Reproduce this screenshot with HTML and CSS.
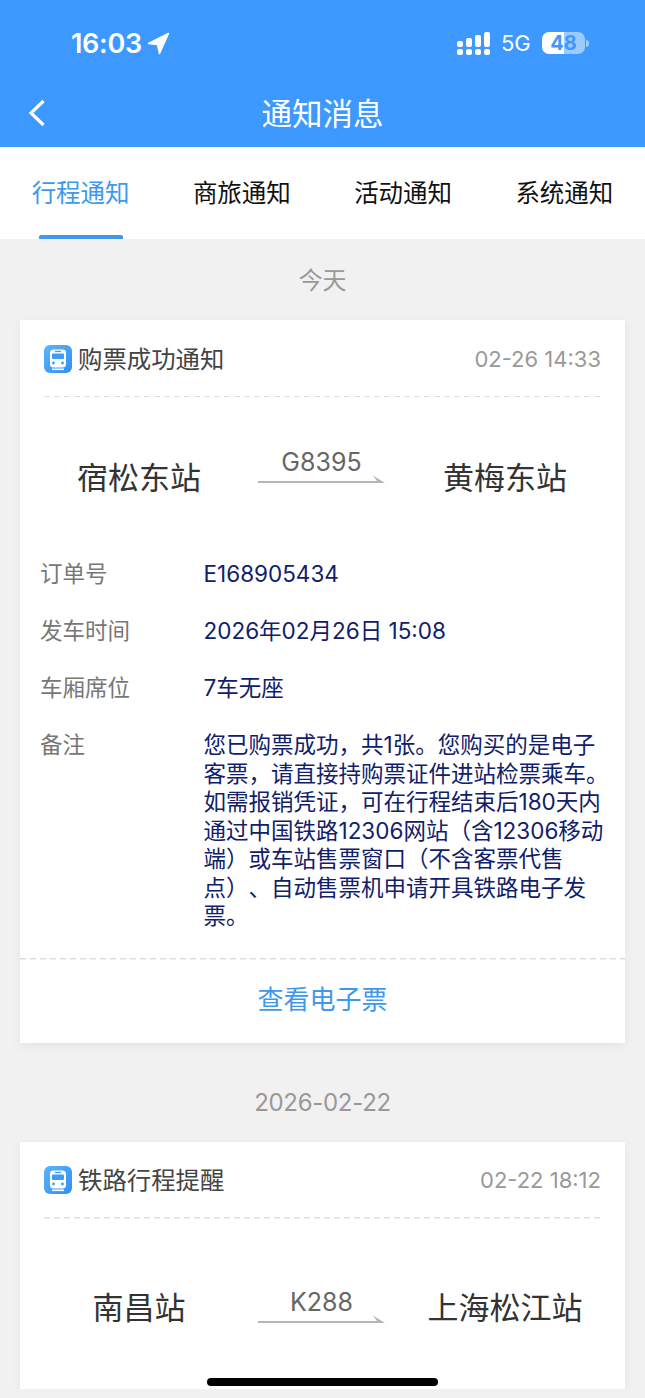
FILE: index.html
```html
<!DOCTYPE html>
<html>
<head>
	<title>通知消息</title>
	<meta charset="utf-8">
	<link rel="stylesheet" href="styles.css">
</head>
<body>
	<div id="page">
		<!--header start-->
		<div class="header">
			<div class="status">
				<div class="s_time">
					<span>16:03</span>
					<svg width="23" height="23" viewBox="0 0 23 23"><path d="M21.5 1.5 L1.5 11.5 L10.5 12.5 L12.5 21.5 Z" fill="#fff" stroke="#fff" stroke-width="1.5" stroke-linejoin="round"/></svg>
				</div>
				<div class="s_right">
					<svg width="34" height="23" viewBox="0 0 34 23" fill="#fff">
						<rect x="0" y="9" width="6" height="6" rx="2"/><rect x="0" y="17" width="6" height="6" rx="2"/>
						<rect x="9" y="6" width="6" height="9" rx="2"/><rect x="9" y="17" width="6" height="6" rx="2"/>
						<rect x="18" y="3" width="6" height="12" rx="2"/><rect x="18" y="17" width="6" height="6" rx="2"/>
						<rect x="27" y="0" width="6" height="15" rx="2"/><rect x="27" y="17" width="6" height="6" rx="2"/>
					</svg>
					<span class="s_net">5G</span>
					<div class="battery"><span class="b_num">48</span></div>
					<div class="b_nub"></div>
				</div>
			</div>
			<div class="nav">
				<svg class="back" width="18" height="28" viewBox="0 0 18 28"><path d="M15.5 2 L3 14 L15.5 26" fill="none" stroke="#fff" stroke-width="3.2"/></svg>
				<div class="title">通知消息</div>
			</div>
		</div>
		<!--end header-->

		<div class="tabs">
			<div class="tab on"><span class="t_text">行程通知</span><i class="t_bar"></i></div>
			<div class="tab"><span class="t_text">商旅通知</span></div>
			<div class="tab"><span class="t_text">活动通知</span></div>
			<div class="tab"><span class="t_text">系统通知</span></div>
		</div>

		<!--list start-->
		<div class="list">
			<div class="day">今天</div>
			<div class="card">
				<div class="c_head">
					<svg class="c_icon" width="28" height="28" viewBox="0 0 28 28">
						<defs><linearGradient id="iconBg" x1="0" y1="0" x2="1" y2="1"><stop offset="0" stop-color="#5cb4fb"/><stop offset="1" stop-color="#2f8ff2"/></linearGradient></defs>
						<rect width="28" height="28" rx="6" fill="url(#iconBg)"/>
						<path d="M9.5 4.5h9a3.5 3.5 0 0 1 3.5 3.5v11a3.5 3.5 0 0 1-3.5 3.5h-9a3.5 3.5 0 0 1-3.5-3.5V8a3.5 3.5 0 0 1 3.5-3.5z" fill="#fff"/>
						<rect x="8" y="8.5" width="12" height="5.5" rx="1" fill="#3d9cf6"/>
						<circle cx="9.5" cy="18" r="1.4" fill="#3d9cf6"/><circle cx="18.5" cy="18" r="1.4" fill="#3d9cf6"/>
						<rect x="11" y="5.8" width="6" height="1.3" fill="#3d9cf6"/>
						<rect x="8" y="23.5" width="12" height="1.6" fill="#fff"/>
					</svg>
					<span class="c_title">购票成功通知</span>
					<span class="c_date">02-26 14:33</span>
				</div>
				<div class="route">
					<div class="station">宿松东站</div>
					<div class="r_mid">
						<div class="train">G8395</div>
						<svg class="arrow" width="127" height="10" viewBox="0 0 127 10"><path d="M0 6H119L115 .5 127 8H0Z" fill="#b5b5b5"/></svg>
					</div>
					<div class="station">黄梅东站</div>
				</div>
				<div class="rows">
					<div class="row"><span class="r_key">订单号</span><span class="r_val">E168905434</span></div>
					<div class="row"><span class="r_key">发车时间</span><span class="r_val">2026年02月26日 15:08</span></div>
					<div class="row"><span class="r_key">车厢席位</span><span class="r_val">7车无座</span></div>
					<div class="row"><span class="r_key">备注</span><span class="r_val">您已购票成功，共1张。您购买的是电子客票，请直接持购票证件进站检票乘车。如需报销凭证，可在行程结束后180天内通过中国铁路12306网站（含12306移动端）或车站售票窗口（不含客票代售点）、自动售票机申请开具铁路电子发票。</span></div>
				</div>
				<div class="c_btn">查看电子票</div>
			</div>

			<div class="day">2026-02-22</div>
			<div class="card">
				<div class="c_head">
					<svg class="c_icon" width="28" height="28" viewBox="0 0 28 28">
						<rect width="28" height="28" rx="6" fill="url(#iconBg)"/>
						<path d="M9.5 4.5h9a3.5 3.5 0 0 1 3.5 3.5v11a3.5 3.5 0 0 1-3.5 3.5h-9a3.5 3.5 0 0 1-3.5-3.5V8a3.5 3.5 0 0 1 3.5-3.5z" fill="#fff"/>
						<rect x="8" y="8.5" width="12" height="5.5" rx="1" fill="#3d9cf6"/>
						<circle cx="9.5" cy="18" r="1.4" fill="#3d9cf6"/><circle cx="18.5" cy="18" r="1.4" fill="#3d9cf6"/>
						<rect x="11" y="5.8" width="6" height="1.3" fill="#3d9cf6"/>
						<rect x="8" y="23.5" width="12" height="1.6" fill="#fff"/>
					</svg>
					<span class="c_title">铁路行程提醒</span>
					<span class="c_date">02-22 18:12</span>
				</div>
				<div class="route next">
					<div class="station">南昌站</div>
					<div class="r_mid">
						<div class="train">K288</div>
						<svg class="arrow" width="127" height="10" viewBox="0 0 127 10"><path d="M0 6H119L115 .5 127 8H0Z" fill="#b5b5b5"/></svg>
					</div>
					<div class="station">上海松江站</div>
				</div>
			</div>
		</div>
		<!--end list-->

		<div class="home"></div>
	</div>
</body>
</html>
```

FILE: styles.css
```css
*{margin:0;padding:0;box-sizing:border-box;}
body{font-family:Inter,"Noto Sans CJK SC",sans-serif;background:#f1f1f1;}
#page{position:relative;width:645px;height:1398px;overflow:hidden;display:flex;flex-direction:column;background:#f1f1f1;}
svg{display:block;}
/*header start*/
.header{background:#3d98ff;color:#fff;height:147px;}
.status{height:80px;padding:28px 56px 0 71px;display:flex;justify-content:space-between;align-items:flex-start;}
.s_time{display:flex;align-items:center;gap:5px;height:30px;font-size:27px;font-weight:600;letter-spacing:-.3px;}
.s_right{display:flex;align-items:center;height:30px;}
.s_net{margin-left:10px;width:41px;font-size:22px;}
.battery{width:43px;height:22px;border-radius:7px;background:linear-gradient(90deg,#fff 50%,#9ccbff 50%);text-align:center;}
.b_num{font-size:20px;font-weight:700;line-height:22px;color:#3d98ff;display:block;}
.b_nub{width:3px;height:7px;margin-left:1px;background:#9ccbff;border-radius:0 3px 3px 0;}
.nav{position:relative;height:67px;display:flex;align-items:center;justify-content:center;}
.back{position:absolute;left:28px;top:19px;}
.title{font-size:30.5px;line-height:67px;}
/*end header*/
.tabs{height:92px;background:#fff;display:grid;grid-template-columns:repeat(4,1fr);}
.tab{display:flex;flex-direction:column;align-items:center;font-size:24.5px;color:#111;}
.t_text{margin-top:29px;line-height:34px;}
.tab.on{color:#3d98ee;}
.t_bar{margin-top:auto;width:84px;height:4px;border-radius:2px 2px 0 0;background:#3d98ee;}
/*list start*/
.list{height:1150px;overflow:hidden;padding:0 20px;}
.day{height:81px;line-height:83px;text-align:center;font-size:24px;letter-spacing:-.3px;color:#999;}
.card{background:#fff;box-shadow:0 3px 10px rgba(0,0,0,.06);}
.card + .day{margin-top:18px;}
.c_head{margin:0 24px;height:77px;display:flex;align-items:center;background:repeating-linear-gradient(90deg,#ddd 0 6px,transparent 6px 10px) left bottom/100% 1.5px no-repeat;}
.c_icon{margin-right:6px;}
.c_title{margin-bottom:3px;font-size:24.4px;color:#444;}
.c_date{margin-left:auto;font-size:22px;color:#999;}
.route{display:grid;grid-template-columns:238px 127px 1fr;align-items:start;height:163px;padding-top:50px;}
.route.next{height:171px;padding-top:69px;}
.station{margin-top:11px;line-height:40px;text-align:center;font-size:31px;color:#333;}
.route.next .station{margin-top:0;}
.train{line-height:30px;text-align:center;font-size:25px;color:#666;}
.arrow{margin-top:-2px;}
.route.next .train{margin-top:-1px;}
.rows{padding:0 15px 27px 20px;}
.row{display:grid;grid-template-columns:163.5px 1fr;margin-bottom:28.5px;font-size:22.5px;line-height:28.5px;}
.row:last-child{margin-bottom:0;}
.r_key{color:#777;}
.r_val{color:#10206a;text-spacing-trim:space-all;}
.c_btn{height:85px;line-height:84px;text-align:center;font-size:26px;color:#3d98ee;background:repeating-linear-gradient(90deg,#ddd 0 6px,transparent 6px 10px) left top/100% 1.5px no-repeat;}
/*end list*/
.home{position:absolute;left:207px;top:1378px;width:231px;height:8px;border-radius:4px;background:#000;}
```
